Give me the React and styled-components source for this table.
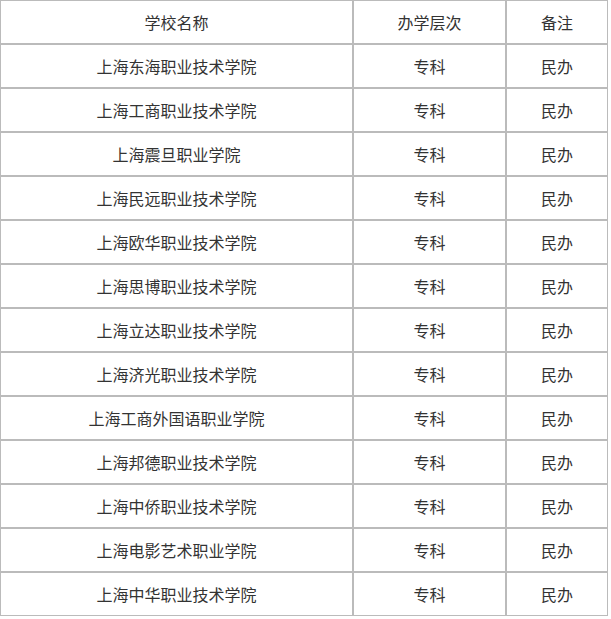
import React from "react";
import styled, { createGlobalStyle } from "styled-components";

const GlobalStyle = createGlobalStyle`
  body {
    margin: 0;
    background: #fff;
    font-family: "Noto Sans CJK SC", "Noto Sans", sans-serif;
  }
`;

const Table = styled.table`
  width: 608px;
  table-layout: fixed;
  border-collapse: separate;
  border-spacing: 0;
`;

const Col = styled.col`
  width: ${(p) => p.$w}px;
`;

const Cell = styled.td`
  box-sizing: border-box;
  height: 44px;
  padding: 0 4px;
  border: 1px solid #bbbbbb;
  text-align: center;
  vertical-align: middle;
  font-size: 16px;
  font-weight: normal;
  color: #333333;
  white-space: nowrap;
`;

const HeadCell = styled(Cell).attrs({ as: "th" })``;

const schools = [
  "上海东海职业技术学院",
  "上海工商职业技术学院",
  "上海震旦职业学院",
  "上海民远职业技术学院",
  "上海欧华职业技术学院",
  "上海思博职业技术学院",
  "上海立达职业技术学院",
  "上海济光职业技术学院",
  "上海工商外国语职业学院",
  "上海邦德职业技术学院",
  "上海中侨职业技术学院",
  "上海电影艺术职业学院",
  "上海中华职业技术学院",
];

const App = () => {
  return (
    <>
      <GlobalStyle />
      <Table>
        <colgroup>
          <Col $w={353} />
          <Col $w={153} />
          <Col $w={102} />
        </colgroup>
        <thead>
          <tr>
            <HeadCell>学校名称</HeadCell>
            <HeadCell>办学层次</HeadCell>
            <HeadCell>备注</HeadCell>
          </tr>
        </thead>
        <tbody>
          {schools.map((name) => (
            <tr key={name}>
              <Cell>{name}</Cell>
              <Cell>专科</Cell>
              <Cell>民办</Cell>
            </tr>
          ))}
        </tbody>
      </Table>
    </>
  );
};

export default App;
